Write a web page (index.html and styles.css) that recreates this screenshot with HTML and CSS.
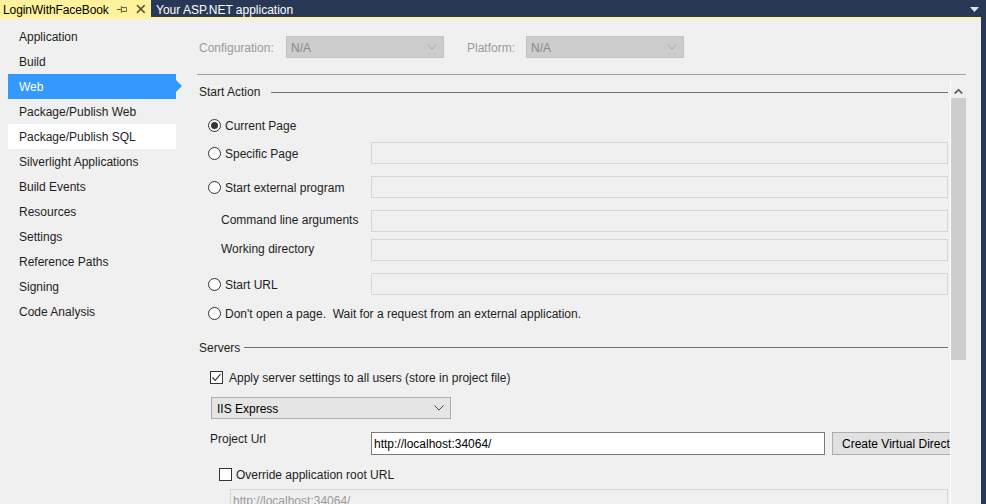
FILE: index.html
```html
<!DOCTYPE html>
<html>
<head>
<meta charset="utf-8">
<link rel="stylesheet" href="styles.css">
</head>
<body>
<div class="window">
  <div class="tabbar">
    <div class="tab active">
      <span class="tab-title">LoginWithFaceBook</span>
      <svg class="pin" width="11" height="9" viewBox="0 0 11 9"><path d="M0 4.5H4M4.5 1V8M5 2.5H10V6.5H5" fill="none" stroke="#5a5a3a" stroke-width="1"/></svg>
      <svg class="close" width="10" height="10" viewBox="0 0 10 10"><path d="M1 1L9 9M9 1L1 9" stroke="#5a5a3a" stroke-width="1.6"/></svg>
    </div>
    <div class="tab"><span class="tab-title">Your ASP.NET application</span></div>
    <div class="tab-spacer"></div>
    <svg class="tab-menu" width="9" height="5" viewBox="0 0 9 5"><path d="M0 0H9L4.5 5Z" fill="#dfe3ea"/></svg>
  </div>
  <div class="accent"></div>
  <div class="body">
    <nav class="sidebar">
      <div class="nav-item">Application</div>
      <div class="nav-item">Build</div>
      <div class="nav-item selected">Web</div>
      <div class="nav-item">Package/Publish Web</div>
      <div class="nav-item hover">Package/Publish SQL</div>
      <div class="nav-item">Silverlight Applications</div>
      <div class="nav-item">Build Events</div>
      <div class="nav-item">Resources</div>
      <div class="nav-item">Settings</div>
      <div class="nav-item">Reference Paths</div>
      <div class="nav-item">Signing</div>
      <div class="nav-item">Code Analysis</div>
    </nav>
    <main class="page">
      <div class="config-row">
        <span class="config-label lbl">Configuration:</span>
        <div class="select disabled"><span class="lbl">N/A</span><svg width="10" height="6" viewBox="0 0 10 6"><path d="M0.5 0.5L5 5L9.5 0.5" fill="none" stroke="#a8a8a8"/></svg></div>
        <span class="config-label platform lbl">Platform:</span>
        <div class="select disabled"><span class="lbl">N/A</span><svg width="10" height="6" viewBox="0 0 10 6"><path d="M0.5 0.5L5 5L9.5 0.5" fill="none" stroke="#a8a8a8"/></svg></div>
      </div>
      <div class="divider"></div>
      <div class="scroll">
        <div class="scroll-content">
          <div class="group-header"><span class="lbl">Start Action</span><div class="rule"></div></div>

          <div class="row radio-row r-current">
            <span class="radio checked"></span><span class="lbl">Current Page</span>
          </div>
          <div class="row field-row r-specific">
            <div class="radio-label"><span class="radio"></span><span class="lbl">Specific Page</span></div>
            <div class="textbox disabled"></div>
          </div>
          <div class="row field-row r-external">
            <div class="radio-label"><span class="radio"></span><span class="lbl">Start external program</span></div>
            <div class="textbox disabled"></div>
          </div>
          <div class="row field-row r-command">
            <div class="sub-label">Command line arguments</div>
            <div class="textbox disabled"></div>
          </div>
          <div class="row field-row r-working">
            <div class="sub-label">Working directory</div>
            <div class="textbox disabled"></div>
          </div>
          <div class="row field-row r-url">
            <div class="radio-label"><span class="radio"></span><span class="lbl">Start URL</span></div>
            <div class="textbox disabled"></div>
          </div>
          <div class="row radio-row r-dont">
            <span class="radio"></span><span class="lbl">Don't open a page.&nbsp; Wait for a request from an external application.</span>
          </div>

          <div class="group-header servers"><span class="lbl">Servers</span><div class="rule"></div></div>

          <div class="row check-row r-apply">
            <span class="checkbox checked"><svg width="11" height="11" viewBox="0 0 11 11"><path d="M1.5 5.5L4.2 8.3L9.5 2.2" fill="none" stroke="#333" stroke-width="1.2"/></svg></span>
            <span class="lbl">Apply server settings to all users (store in project file)</span>
          </div>
          <div class="select server-select"><span class="lbl">IIS Express</span><svg width="10" height="6" viewBox="0 0 10 6"><path d="M0.5 0.5L5 5L9.5 0.5" fill="none" stroke="#444"/></svg></div>
          <div class="row url-row">
            <div class="url-label">Project Url</div>
            <div class="textbox active-box">http://localhost:34064/</div>
            <div class="button">Create Virtual Directory</div>
          </div>
          <div class="row check-row r-override">
            <span class="checkbox"></span><span class="lbl">Override application root URL</span>
          </div>
          <div class="textbox disabled root-box">http://localhost:34064/</div>
        </div>
        <div class="scrollbar">
          <svg class="sb-up" width="9" height="6" viewBox="0 0 9 6"><path d="M0 5L4.5 0.5L9 5L7.5 6L4.5 3L1.5 6Z" fill="#606060"/></svg>
          <div class="sb-thumb"></div>
        </div>
      </div>
    </main>
  </div>
</div>
</body>
</html>
```

FILE: styles.css
```css
* { box-sizing: border-box; }
html, body { margin: 0; padding: 0; }
body {
  width: 986px;
  height: 504px;
  overflow: hidden;
  background: #293955;
  font-family: "Liberation Sans", Arial, sans-serif;
  font-size: 12px;
  color: #1e1e1e;
}
.lbl { padding-top: 2px; }
.window {
  display: flex;
  flex-direction: column;
  height: 504px;
}
.tabbar {
  height: 17px;
  display: flex;
  align-items: center;
  background: #293955;
  flex: none;
}
.tab {
  height: 17px;
  display: flex;
  align-items: center;
  color: #ffffff;
  padding: 0 5px 0 5px;
}
.tab-title { padding-top: 3px; line-height: 14px; }
.tab.active {
  background: #fff29d;
  color: #000;
  padding: 0 5px 0 3px;
  width: 151px;
}
.tab.active .tab-title { margin-right: 8px; letter-spacing: -0.1px; }
.pin { margin-right: 9px; margin-top: 1px; }
.close { margin-top: 1px; }
.tab-spacer { flex: 1; }
.tab-menu { margin-right: 7px; margin-top: 1px; }
.accent {
  height: 2px;
  background: #fff29d;
  margin-right: 5px;
  flex: none;
}
.body {
  flex: 1;
  display: flex;
  background: #f0f0f0;
  margin-right: 5px;
  min-height: 0;
}
.sidebar {
  width: 182px;
  flex: none;
  padding: 5px 6px 0 8px;
}
.nav-item {
  height: 25px;
  line-height: 23px;
  padding-top: 2px;
  padding-left: 11px;
  color: #1e1e1e;
  white-space: nowrap;
  position: relative;
}
.nav-item.selected {
  background: #3399ff;
  color: #ffffff;
}
.nav-item.selected::after {
  content: "";
  position: absolute;
  right: -6px;
  top: 6px;
  border-top: 6.5px solid transparent;
  border-bottom: 6.5px solid transparent;
  border-left: 6px solid #3399ff;
}
.nav-item.hover { background: #ffffff; }

.page {
  flex: 1;
  display: flex;
  flex-direction: column;
  min-width: 0;
}
.config-row {
  margin-top: 17px;
  padding-left: 17px;
  height: 22px;
  display: flex;
  align-items: center;
  flex: none;
}
.config-label {
  color: #9a9a9a;
  width: 87px;
}
.config-label.platform { margin-left: 23px; width: 59px; }
.select {
  height: 22px;
  display: flex;
  align-items: center;
  justify-content: space-between;
  padding: 0 6px 0 4px;
  border: 1px solid #acacac;
  background: #e5e5e5;
  color: #000;
}
.select.disabled {
  width: 158px;
  background: #cccccc;
  border-color: #c3c3c3;
  color: #8a8a8a;
}
.divider {
  margin: 16px 15px 0 15px;
  height: 1px;
  background: #a0a0a0;
  flex: none;
}
.scroll {
  flex: 1;
  margin: 6px 15px 0 15px;
  display: flex;
  min-height: 0;
  overflow: hidden;
}
.scroll-content {
  flex: 1;
  min-width: 0;
  overflow: hidden;
  padding-right: 2px;
  display: flex;
  flex-direction: column;
}
.scrollbar {
  width: 16px;
  flex: none;
  border-left: 1px solid #ffffff;
  background: #f0f0f0;
  display: flex;
  flex-direction: column;
  align-items: center;
}
.sb-up { margin-top: 7px; }
.sb-thumb {
  margin-top: 4px;
  width: 15px;
  height: 262px;
  background: #cdcdcd;
}
.group-header {
  height: 20px;
  display: flex;
  align-items: center;
  padding-left: 2px;
  flex: none;
  color: #1e1e1e;
}
.group-header .rule {
  flex: 1;
  height: 1px;
  background: #6f6f6f;
  margin-left: 11px;
  margin-top: 2px;
}
.group-header.servers { margin-top: 14px; }
.group-header.servers .rule { margin-left: 4px; margin-top: 1px; }

.row { display: flex; align-items: center; flex: none; }
.radio-row { height: 20px; padding-left: 11px; gap: 4px; }
.r-current { margin-top: 14px; }
.r-dont { margin-top: 8px; }
.field-row {
  display: grid;
  grid-template-columns: 174px 1fr;
  height: 22px;
}
.r-specific { margin-top: 7px; }
.r-external { margin-top: 12px; }
.r-command { margin-top: 12px; }
.r-working { margin-top: 7px; }
.r-url { margin-top: 12px; }
.radio-label { display: flex; align-items: center; gap: 4px; padding-left: 11px; }
.sub-label { padding-left: 24px; margin-top: -2px; }
.radio {
  width: 13px;
  height: 13px;
  border: 1px solid #333333;
  border-radius: 50%;
  background: #ffffff;
  display: inline-flex;
  align-items: center;
  justify-content: center;
  flex: none;
}
.radio.checked::after {
  content: "";
  width: 7px;
  height: 7px;
  border-radius: 50%;
  background: #333333;
}
.textbox {
  height: 22px;
  border: 1px solid #d6d6d6;
  background: #f0f0f0;
  padding: 0 3px;
  line-height: 21px;
  padding-top: 1px;
  white-space: nowrap;
  overflow: hidden;
}
.check-row { height: 20px; gap: 6px; }
.r-apply { margin-top: 10px; padding-left: 13px; }
.checkbox {
  width: 13px;
  height: 13px;
  border: 1px solid #333333;
  background: #ffffff;
  display: inline-flex;
  align-items: center;
  justify-content: center;
  flex: none;
}
.server-select {
  margin-top: 10px;
  margin-left: 14px;
  width: 240px;
  flex: none;
  padding-left: 5px;
  padding-right: 6px;
}
.url-row {
  margin-top: 13px;
  height: 23px;
  align-items: flex-start;
}
.url-label {
  width: 174px;
  padding-left: 13px;
  flex: none;
  line-height: 14px;
}
.textbox.active-box {
  width: 454px;
  height: 23px;
  flex: none;
  background: #ffffff;
  border-color: #7a7a7a;
  color: #000;
  line-height: 21px;
  padding-top: 1px;
  padding-left: 2px;
}
.button {
  margin-left: 7px;
  height: 23px;
  flex: none;
  border: 1px solid #adadad;
  background: #e1e1e1;
  padding: 1px 9px 0 9px;
  line-height: 20px;
  white-space: nowrap;
  color: #000;
}
.r-override { margin-top: 9px; padding-left: 22px; gap: 4px; }
.root-box {
  margin-top: 5px;
  margin-left: 33px;
  flex: none;
  color: #9a9a9a;
  padding-left: 2px;
}
```
